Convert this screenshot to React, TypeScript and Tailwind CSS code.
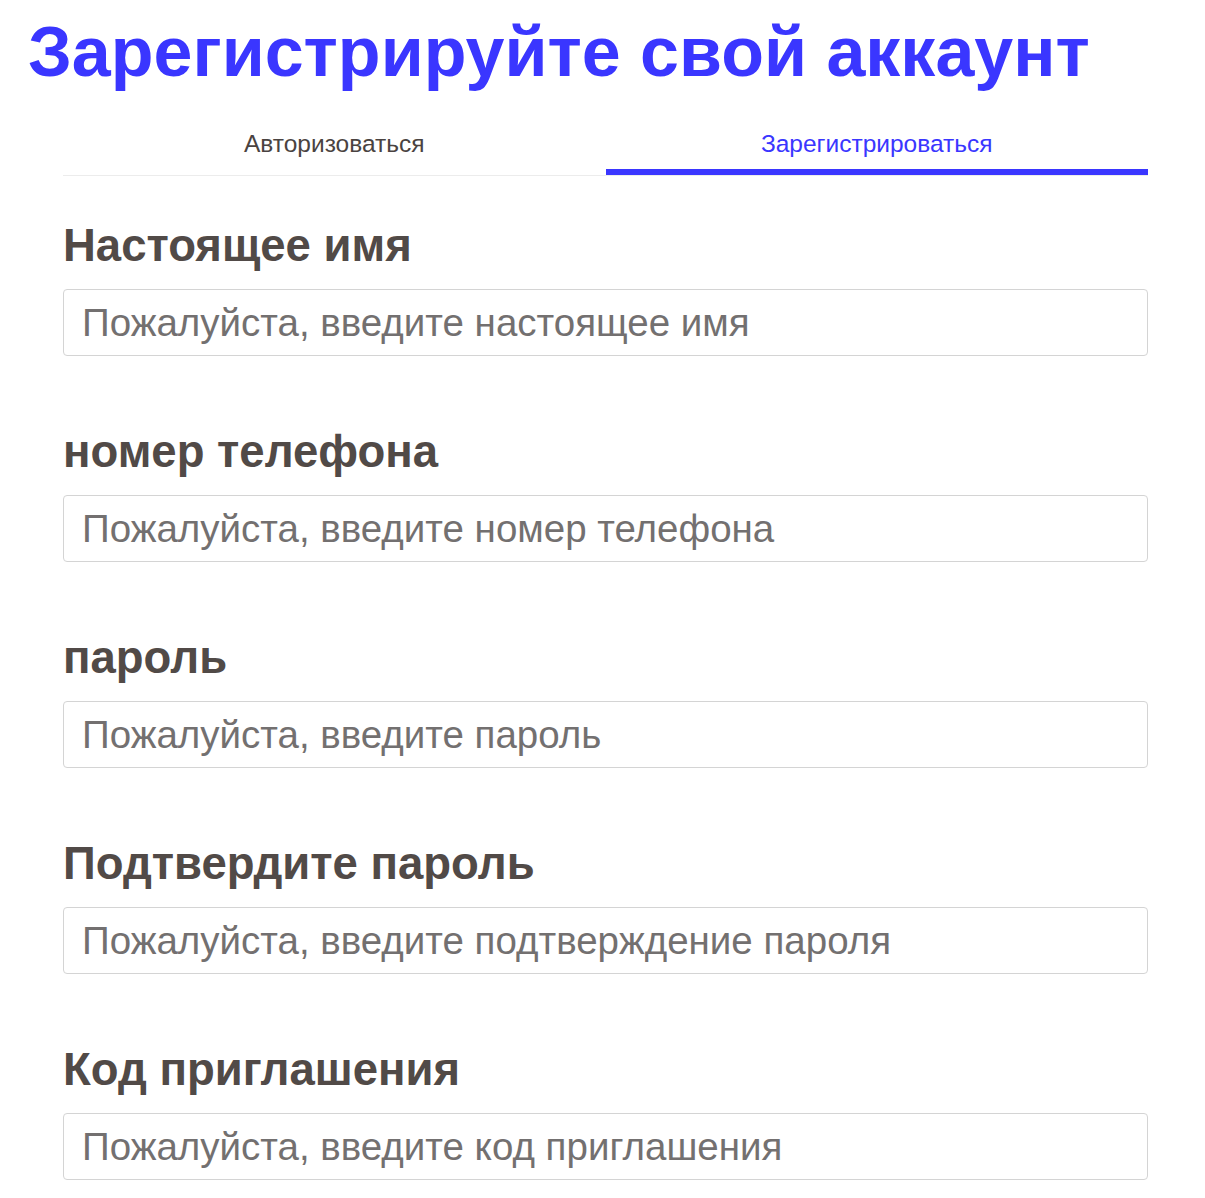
const fields = [
  { label: "Настоящее имя", placeholder: "Пожалуйста, введите настоящее имя", type: "text" },
  { label: "номер телефона", placeholder: "Пожалуйста, введите номер телефона", type: "tel" },
  { label: "пароль", placeholder: "Пожалуйста, введите пароль", type: "password" },
  { label: "Подтвердите пароль", placeholder: "Пожалуйста, введите подтверждение пароля", type: "password" },
  { label: "Код приглашения", placeholder: "Пожалуйста, введите код приглашения", type: "text" },
]

export default function App() {
  return (
    <div className="min-h-screen bg-white font-['Liberation_Sans',Arial,sans-serif]">
      {/* Title */}
      <h1 className="pt-[17px] pl-[28px] text-[70px] leading-[70px] font-bold text-[#3a36ff] whitespace-nowrap">
        Зарегистрируйте свой аккаунт
      </h1>

      <div className="ml-[63px] w-[1085px]">
        {/* Tabs */}
        <div className="mt-[33px] flex border-b border-[#ececec]">
          <button className="flex-1 h-[55px] pb-[6px] text-[24.5px] text-[#4a4341]">Авторизоваться</button>
          <button className="flex-1 h-[55px] text-[24.5px] text-[#3a36ff] border-b-[6px] border-[#3a36ff]">
            Зарегистрироваться
          </button>
        </div>

        {/* Form */}
        <form className="mt-[42px] flex flex-col gap-[68px]">
          {fields.map((f) => (
            <div key={f.label}>
              <label className="block text-[45.5px] leading-[56px] font-bold text-[#514a47]">{f.label}</label>
              <input
                type={f.type}
                placeholder={f.placeholder}
                className="mt-[15px] block w-full h-[67px] px-[18px] rounded-[4px] border border-[#d4d4d4] text-[38.5px] text-[#333] placeholder:text-[#737070] outline-none"
              />
            </div>
          ))}
        </form>
      </div>
    </div>
  )
}
